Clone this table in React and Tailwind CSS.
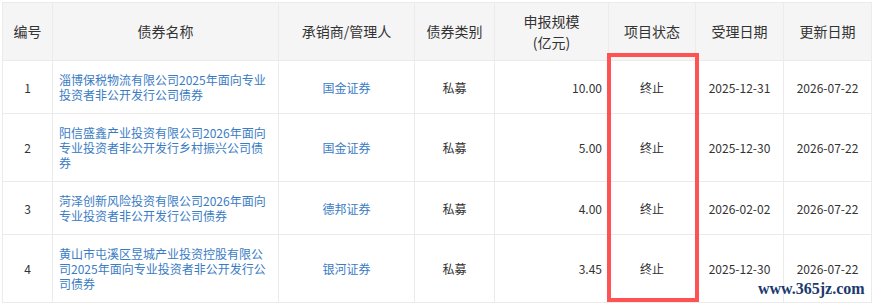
import React from "react";

const rows = [
  { no: "1", name: "淄博保税物流有限公司2025年面向专业投资者非公开发行公司债券", uw: "国金证券", type: "私募", amt: "10.00", st: "终止", d1: "2025-12-31", d2: "2026-07-22" },
  { no: "2", name: "阳信盛鑫产业投资有限公司2026年面向专业投资者非公开发行乡村振兴公司债券", uw: "国金证券", type: "私募", amt: "5.00", st: "终止", d1: "2025-12-30", d2: "2026-07-22" },
  { no: "3", name: "菏泽创新风险投资有限公司2026年面向专业投资者非公开发行公司债券", uw: "德邦证券", type: "私募", amt: "4.00", st: "终止", d1: "2026-02-02", d2: "2026-07-22" },
  { no: "4", name: "黄山市屯溪区昱城产业投资控股有限公司2025年面向专业投资者非公开发行公司债券", uw: "银河证券", type: "私募", amt: "3.45", st: "终止", d1: "2025-12-30", d2: "2026-07-22" },
];

const font = { fontFamily: '"Microsoft YaHei", "Noto Sans CJK SC", "Noto Sans", sans-serif' };

export default function App() {
  return (
    <div className="relative w-[880px] h-[303px] overflow-hidden bg-white pl-[2px] pt-[2px]" style={font}>
      <table className="table-fixed border-collapse w-[869px] text-[12px] leading-[15px] text-[#333]">
        <colgroup>
          <col className="w-[50px]" />
          <col className="w-[226px]" />
          <col className="w-[136px]" />
          <col className="w-[80px]" />
          <col className="w-[114px]" />
          <col className="w-[87px]" />
          <col className="w-[88px]" />
          <col className="w-[88px]" />
        </colgroup>
        <thead>
          <tr className="h-[58px] bg-[#f5f5f5] text-[14px] leading-[21px] text-[#333]">
            <th className="border border-[#ebebeb] font-normal text-center">编号</th>
            <th className="border border-[#ebebeb] font-normal text-center">债券名称</th>
            <th className="border border-[#ebebeb] font-normal text-center">承销商/管理人</th>
            <th className="border border-[#ebebeb] font-normal text-center">债券类别</th>
            <th className="border border-[#ebebeb] font-normal text-center">申报规模<br />(亿元)</th>
            <th className="border border-[#ebebeb] font-normal text-center">项目状态</th>
            <th className="border border-[#ebebeb] font-normal text-center">受理日期</th>
            <th className="border border-[#ebebeb] font-normal text-center">更新日期</th>
          </tr>
        </thead>
        <tbody>
          {rows.map((r) => (
            <tr key={r.no}>
              <td className="border border-[#ebebeb] py-[11px] px-[6px] text-center">{r.no}</td>
              <td className="border border-[#ebebeb] py-[11px] px-[6px] text-left text-[#3a7cc4] break-all">{r.name}</td>
              <td className="border border-[#ebebeb] py-[11px] px-[6px] text-center text-[#3a7cc4]">{r.uw}</td>
              <td className="border border-[#ebebeb] py-[11px] px-[6px] text-center">{r.type}</td>
              <td className="border border-[#ebebeb] py-[11px] px-[6px] text-right">{r.amt}</td>
              <td className="border border-[#ebebeb] py-[11px] px-[6px] text-center">{r.st}</td>
              <td className="border border-[#ebebeb] py-[11px] px-[6px] text-center">{r.d1}</td>
              <td className="border border-[#ebebeb] py-[11px] px-[6px] text-center">{r.d2}</td>
            </tr>
          ))}
          <tr className="h-[50px]">
            <td className="border border-[#ebebeb]" />
            <td className="border border-[#ebebeb]" />
            <td className="border border-[#ebebeb]" />
            <td className="border border-[#ebebeb]" />
            <td className="border border-[#ebebeb]" />
            <td className="border border-[#ebebeb]" />
            <td className="border border-[#ebebeb]" />
            <td className="border border-[#ebebeb]" />
          </tr>
        </tbody>
      </table>
      <div className="absolute left-[607px] top-[53px] w-[92px] h-[249px] border-[4px] border-[#ff5252]" />
      <div
        className="absolute left-[758px] top-[280px] text-[16px] leading-[18px] font-bold text-[#1c3a6e]"
        style={{ fontFamily: '"Liberation Serif", serif' }}
      >
        www.365jz.com
      </div>
    </div>
  );
}
